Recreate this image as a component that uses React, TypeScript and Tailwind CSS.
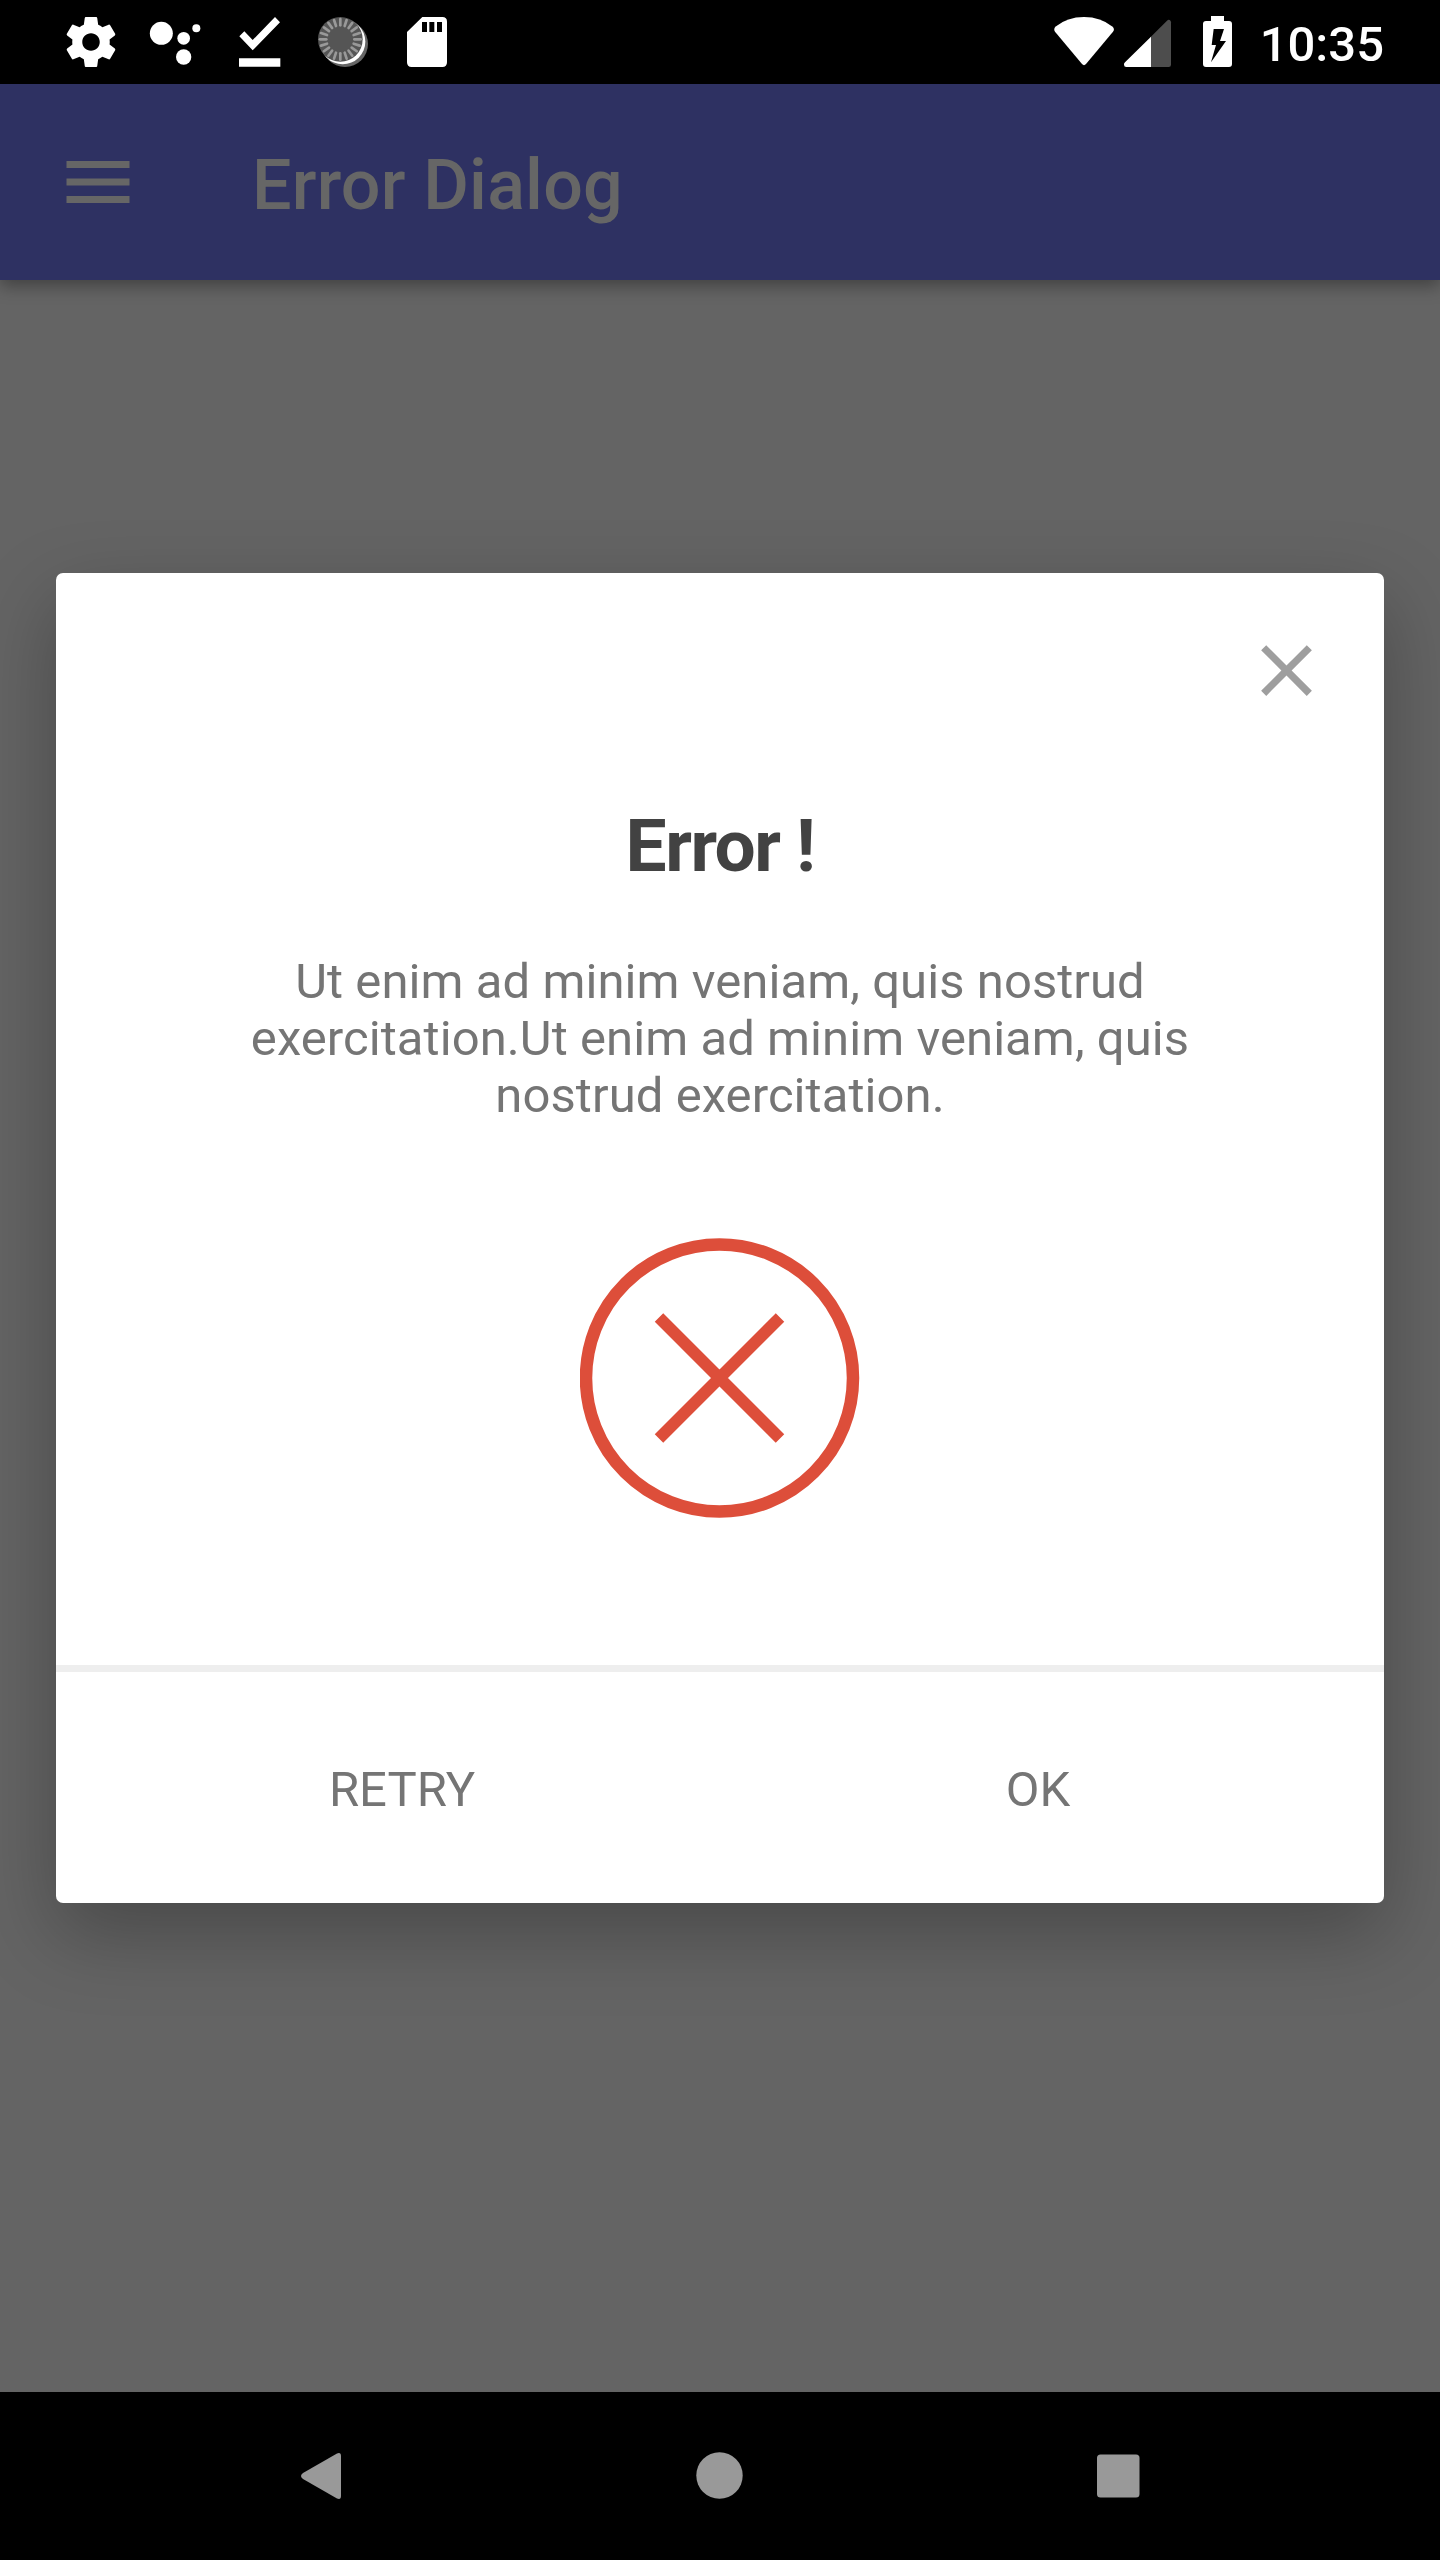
import React from "react";

const TICKS = Array.from({ length: 20 }, (_, i) => i * 18);

function StatusBar() {
  return (
    <header className="flex h-[84px] shrink-0 items-center justify-between bg-black pr-14 pl-[54px] text-white">
      <div className="flex">
        <svg className="h-[84px] w-[88px]" viewBox="42 0 264 252" fill="currentColor">
          <path
            transform="translate(63 36) scale(7.5)"
            d="M19.43 12.98c.04-.32.07-.64.07-.98s-.03-.66-.07-.98l2.11-1.65c.19-.15.24-.42.12-.64l-2-3.46c-.12-.22-.39-.3-.61-.22l-2.49 1c-.52-.4-1.08-.73-1.69-.98l-.38-2.65C14.46 2.18 14.25 2 14 2h-4c-.25 0-.46.18-.49.42l-.38 2.65c-.61.25-1.17.59-1.69.98l-2.49-1c-.23-.09-.49 0-.61.22l-2 3.46c-.13.22-.07.49.12.64l2.11 1.65c-.04.32-.07.65-.07.98s.03.66.07.98l-2.11 1.65c-.19.15-.24.42-.12.64l2 3.46c.12.22.39.3.61.22l2.49-1c.52.4 1.08.73 1.69.98l.38 2.65c.03.24.24.42.49.42h4c.25 0 .46-.18.49-.42l.38-2.65c.61-.25 1.17-.59 1.69-.98l2.49 1c.23.09.49 0 .61-.22l2-3.46c.12-.22.07-.49-.12-.64l-2.11-1.65zM12 15.5c-1.93 0-3.5-1.57-3.5-3.5s1.57-3.5 3.5-3.5 3.5 1.57 3.5 3.5-1.57 3.5-3.5 3.5z"
          />
        </svg>
        <svg className="h-[84px] w-20" viewBox="306 0 240 252" fill="currentColor">
          <circle cx="364" cy="100" r="34.5" />
          <circle cx="431" cy="115" r="19" />
          <circle cx="469" cy="85" r="12" />
          <circle cx="431" cy="171" r="23" />
        </svg>
        <svg className="h-[84px] w-20" viewBox="546 0 240 252" fill="currentColor">
          <path d="M598 109L613 94L638 120L705 51L720 67L638 151ZM597 175H721V200H597Z" />
        </svg>
        <svg className="h-[84px] w-[88px]" viewBox="786 0 264 252">
          <circle cx="915" cy="132" r="69" fill="#666" />
          <circle cx="908" cy="125" r="68" fill="#fff" />
          <circle cx="901" cy="118" r="67" fill="#555" />
          {TICKS.map((angle) => (
            <path
              key={angle}
              d="M901 57V76"
              transform={`rotate(${angle} 901 118)`}
              stroke="#999"
              strokeWidth="8"
              strokeLinecap="round"
            />
          ))}
        </svg>
        <svg className="h-[84px] w-[72px]" viewBox="1050 0 216 252" fill="currentColor">
          <path
            fillRule="evenodd"
            d="M1147 51H1207Q1221 51 1221 65V187Q1221 201 1207 201H1115Q1101 201 1101 187V96ZM1146 66V96H1161V66ZM1168 66V96H1183V66ZM1191 66V96H1206V66Z"
          />
        </svg>
      </div>
      <div className="flex items-center">
        <svg className="h-[84px] w-[70px]" viewBox="60 0 210 252" fill="currentColor">
          <path d="M76 80Q112 51 162 51T248 80Q255 87 249 95L168 192Q162 199 156 192L75 95Q70 87 76 80Z" />
        </svg>
        <svg className="h-[84px] w-[60px]" viewBox="270 0 180 252" fill="currentColor">
          <path fill="#4d4d4d" d="M362 111L411 62Q415 58 419 60T423 67V194Q423 201 416 201H362Z" />
          <path d="M363 110V201H289Q282 201 282 194Q281 191 285 187Z" />
        </svg>
        <svg className="h-[84px] w-[70px]" viewBox="450 0 210 252" fill="currentColor">
          <path
            fillRule="evenodd"
            d="M543 48H582V63H597Q606 63 606 72V192Q606 201 597 201H528Q519 201 519 192V72Q519 63 528 63H543ZM551 87L545 135H558L543 187L588 123H570L582 87Z"
          />
        </svg>
        <div className="w-[134px] pt-[4px] text-right text-[49px] leading-none font-medium">10:35</div>
      </div>
    </header>
  );
}

function AppBar() {
  return (
    <div className="z-10 flex h-[196px] shrink-0 items-center bg-[#2e3162] pl-14 text-[#666] shadow-[0_6px_16px_rgba(0,0,0,0.35)]">
      <svg className="h-[84px] w-[84px]" viewBox="0 0 24 24" fill="currentColor">
        <path d="M3 18h18v-2H3v2zm0-5h18v-2H3v2zm0-7v2h18V6H3z" />
      </svg>
      <h1 className="ml-28 pt-[5px] text-[70px] leading-[82px] font-medium tracking-[0.2px]">Error Dialog</h1>
    </div>
  );
}

function Dialog() {
  return (
    <section className="flex h-[1330px] w-[1328px] flex-col rounded-[7px] bg-white shadow-[0_30px_80px_rgba(0,0,0,0.28)]">
      <div className="flex justify-end pt-[54px] pr-[54px]">
        <svg className="h-[87px] w-[87px]" viewBox="0 0 24 24" fill="#9e9e9e">
          <path d="M19 6.41L17.59 5 12 10.59 6.41 5 5 6.41 10.59 12 5 17.59 6.41 19 12 13.41 17.59 19 19 17.59 13.41 12z" />
        </svg>
      </div>
      <h2 className="mt-[89px] text-center text-[73px] leading-[86px] font-bold tracking-[-1.5px] text-[#424242]">
        Error !
      </h2>
      <p className="mt-[64px] text-center text-[49px] leading-[57px] tracking-[0.07px] text-[#757575]">
        Ut enim ad minim veniam, quis nostrud
        <br />
        exercitation.Ut enim ad minim veniam, quis
        <br />
        nostrud exercitation.
      </p>
      <svg
        className="mt-[114px] h-[280px] w-[280px] self-center"
        viewBox="0 0 280 280"
        fill="none"
        stroke="#dd4e3a"
      >
        <circle cx="139.5" cy="140" r="133.5" strokeWidth="12.5" />
        <path d="M79 79.5L200 200.5M200 79.5L79 200.5" strokeWidth="12" />
      </svg>
      <div className="mt-auto flex h-[238px] border-t-[7px] border-[#eee] px-[28px] pt-[5px] text-[49px] text-[#757575]">
        <button className="w-1/2">RETRY</button>
        <button className="w-1/2">OK</button>
      </div>
    </section>
  );
}

function NavBar() {
  return (
    <nav className="flex h-[168px] shrink-0 items-center justify-between bg-black px-[280px] text-[#999]">
      <svg className="h-[84px] w-[84px]" viewBox="0 0 84 84" fill="currentColor">
        <path d="M57 19.5Q61 18 61 22V62Q61 66 57 64.5L23 45Q19 42 23 39Z" />
      </svg>
      <svg className="h-[84px] w-[84px]" viewBox="0 0 84 84" fill="currentColor">
        <circle cx="41.5" cy="41.5" r="23.2" />
      </svg>
      <svg className="h-[84px] w-[84px]" viewBox="0 0 84 84" fill="currentColor">
        <rect x="21" y="20.5" width="42.5" height="43" rx="3.5" />
      </svg>
    </nav>
  );
}

export default function App() {
  return (
    <div className="flex h-[2560px] w-[1440px] flex-col overflow-hidden bg-[#646464] font-[Roboto,sans-serif]">
      <StatusBar />
      <AppBar />
      <main className="flex flex-1 flex-col items-center pt-[293px]">
        <Dialog />
      </main>
      <NavBar />
    </div>
  );
}
